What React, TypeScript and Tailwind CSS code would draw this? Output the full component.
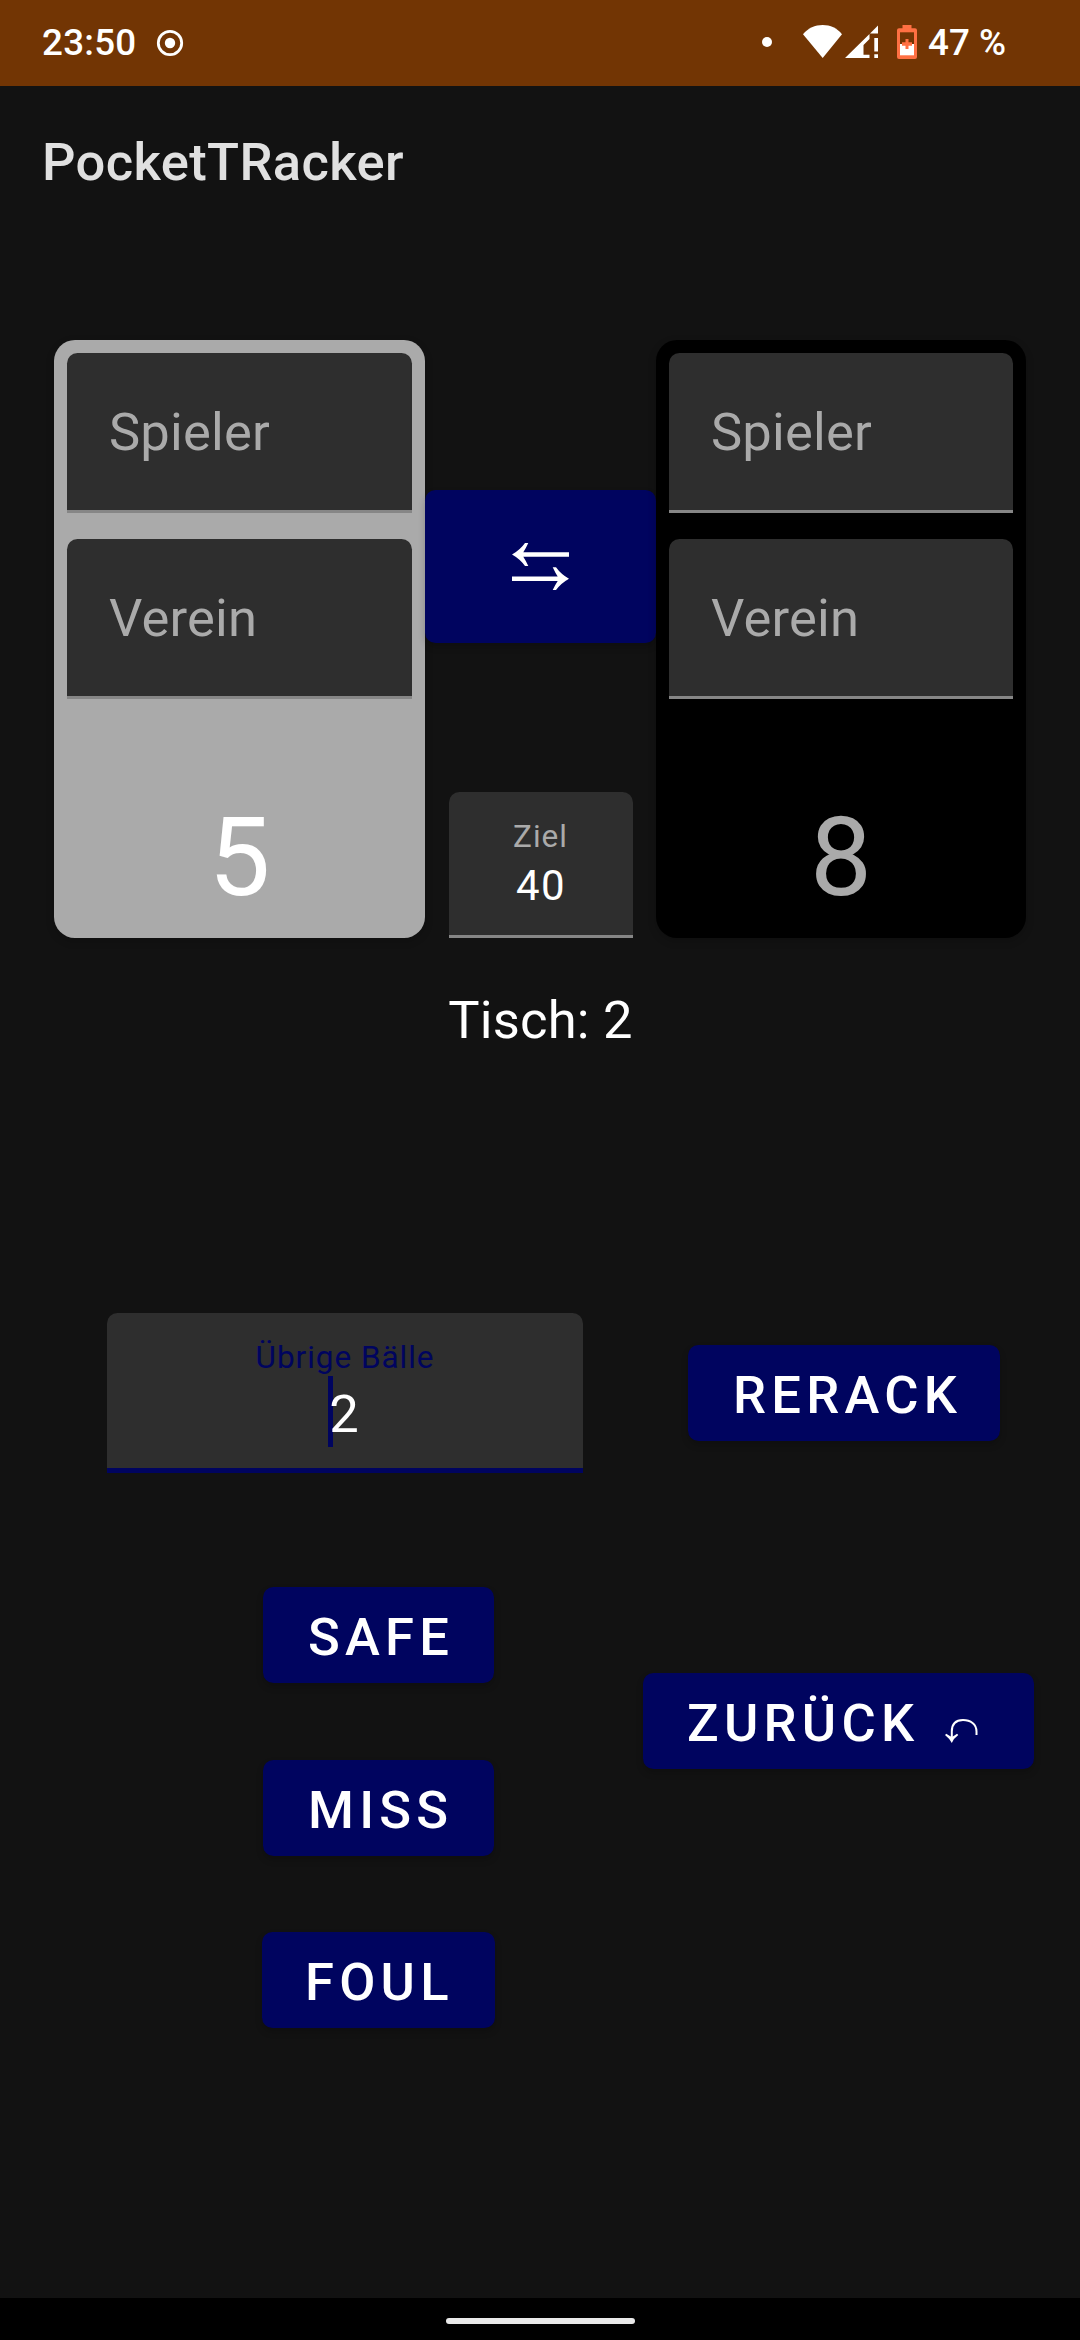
import type { ReactNode } from "react";

function StatusBar() {
  return (
    <header className="flex h-[86px] items-start bg-[#723504] text-[36.75px] font-medium leading-[44px] text-white">
      <span className="ml-[42px] mt-[21px] w-[114px] tracking-[0.25px]">23:50</span>
      <svg className="mt-[29px] h-7 w-7" viewBox="0 0 28 28" fill="none">
        <circle cx="14" cy="14" r="11.7" stroke="white" strokeWidth="2.8" />
        <circle cx="14" cy="14" r="5.2" fill="white" />
      </svg>
      <span className="ml-[578px] mt-[37px] size-2.5 rounded-full bg-white" />
      <svg className="ml-[31px] mt-6 h-[35px] w-10" viewBox="0 0 40 35">
        <path d="M0 10.3C5.2 4 12 1 19.7 1S34 4 39 10.3L19.7 34Z" fill="white" />
      </svg>
      <svg className="ml-[2px] mt-6 h-[35px] w-[34px]" viewBox="0 0 34 35" fill="white">
        <path d="M0 34 24.5 10V15L18.5 21V30.7H24.5V34Z" />
        <path d="M25 9.5 33 1.5V9.5Z" />
        <path d="M29.3 14h3.7v13.5h-3.7zM29.3 30.3h3.7V34h-3.7z" />
      </svg>
      <svg className="ml-[18px] mt-[25px] h-[34px] w-5" viewBox="0 0 20 34">
        <path d="M5.5 0h9v3.3H18a2 2 0 0 1 2 2V32a2 2 0 0 1-2 2H2a2 2 0 0 1-2-2V5.300a2 2 0 0 1 2-2h3.500Z" fill="#ff7043" />
        <path d="M3 7.300h14V19H3Z" fill="#723504" />
        <path d="M3 19h14v11.300H3Z" fill="white" />
        <path d="M8.500 14h3v3.300H15v3.500h-3.500V24h-3v-3.200H5v-3.500h3.500Z" fill="#ff7043" />
      </svg>
      <span className="ml-[11px] mt-[21px] whitespace-nowrap">47 %</span>
    </header>
  );
}

function Field({ label }: { label: string }) {
  return (
    <div className="h-[160px] rounded-t-[10.5px] border-b-[3px] border-[#868686] bg-[#2e2e2e] pl-[42px] pt-[49px] text-[52.5px] leading-[60px] tracking-[0.2px] text-[#aaaaaa]">
      {label}
    </div>
  );
}

function PlayerCard({ score, tone }: { score: number; tone: string }) {
  return (
    <section className={`flex h-[598px] flex-col rounded-[21px] p-[13px] shadow-[0_3px_8px_rgba(0,0,0,0.2)] ${tone}`}>
      <Field label="Spieler" />
      <div className="h-[26px]" />
      <Field label="Verein" />
      <div className="mt-[99px] text-center text-[110.25px] leading-[120px]">{score}</div>
    </section>
  );
}

function ActionButton({ children, size }: { children: ReactNode; size: string }) {
  return (
    <button
      className={`flex h-24 items-start rounded-[10.5px] bg-[#00045f] pt-[20px] text-[52.5px] font-medium leading-[60px] tracking-[5.25px] text-white shadow-[0_4px_7px_rgba(0,0,0,0.2)] ${size}`}
    >
      {children}
    </button>
  );
}

export default function App() {
  return (
    <div className="flex h-[2340px] w-[1080px] flex-col overflow-hidden bg-[#121212] font-['Roboto',sans-serif] text-white">
      <StatusBar />
      <h1 className="h-[254px] pl-[42px] pt-[46px] text-[52.5px] font-medium leading-[60px] tracking-[0.37px] text-[#e0e0e0]">PocketTRacker</h1>

      <div className="grid h-[598px] grid-cols-[371px_231px_370px] pl-[54px]">
        <PlayerCard score={5} tone="bg-[#aaaaaa] text-white" />
        <div className="flex flex-col items-center pt-[150px]">
          <button className="flex h-[153px] w-full items-center justify-center rounded-[10.5px] bg-[#00045f] shadow-[0_4px_7px_rgba(0,0,0,0.2)]">
            <svg className="h-[47px] w-[57px]" viewBox="0 0 57 47" fill="white">
              <path d="M0 11.500Q8 7 13 0h3.300Q13.500 6 11.300 9.200H57v4.500H11.300Q13.500 17 16.300 23H13Q8 16 0 11.500Z" />
              <path d="M57 35.700Q49 31.200 44 24.200h-3.300Q43.500 30.200 45.700 33.400H0v4.500h45.700Q43.500 41.200 40.700 47H44Q49 40.200 57 35.700Z" />
            </svg>
          </button>
          <div className="mt-[149px] h-[146px] w-[184px] rounded-t-[10.5px] border-b-[3px] border-[#868686] bg-[#2e2e2e] pt-[25px] text-center">
            <div className="text-[31.5px] leading-[40px] tracking-[1px] text-[#aaaaaa]">Ziel</div>
            <div className="mt-[4px] pl-px text-[42px] leading-[50px] tracking-[1.3px]">40</div>
          </div>
        </div>
        <PlayerCard score={8} tone="bg-black text-[#aaaaaa]" />
      </div>

      <p className="mt-[52px] pl-px text-center text-[52.5px] leading-[60px] tracking-[0.2px]">Tisch: 2</p>

      <div className="mt-[263px] flex h-[160px] items-start pl-[107px]">
        <div className="h-[160px] w-[476px] rounded-t-[10.5px] border-b-[5px] border-[#00045f] bg-[#2e2e2e] pt-[25px] text-center">
          <div className="text-[31.5px] leading-[40px] tracking-[0.95px] text-[#00045f]">Übrige Bälle</div>
          <div className="-mt-0.5 flex h-[71px] justify-center pl-0.5 text-[52.5px] leading-[76px]">
            <span className="-ml-[5px] h-[71px] w-[5px] bg-[#00045f]" />
            <span className="-ml-[4px]">2</span>
          </div>
        </div>
        <div className="ml-[105px] mt-8">
          <ActionButton size="w-[312px] pl-[45px]">RERACK</ActionButton>
        </div>
      </div>

      <div className="mt-[114px] flex items-start pl-[262px]">
        <div className="flex w-[233px] flex-col items-center">
          <ActionButton size="w-[231px] pl-[45px]">SAFE</ActionButton>
          <div className="h-[77px]" />
          <ActionButton size="w-[231px] pl-[45px]">MISS</ActionButton>
          <div className="h-[76px]" />
          <ActionButton size="w-[233px] pl-[43px]">FOUL</ActionButton>
        </div>
        <div className="ml-[148px] mt-[86px]">
          <ActionButton size="w-[391px] pl-[44px]">
            <span>ZURÜCK</span>
            <svg className="ml-[26px] mt-[25px] h-[26px] w-[33px]" viewBox="0 0 33 26" fill="none">
              <path d="M6.800 21V13.500C6.800 6 10.500 2 18 2S31.500 6 31.500 13.500V17" stroke="white" strokeWidth="2" />
              <path d="M0 17 1.300 15.700Q4 17.500 6.800 19 9.500 17.500 12 15.700L13.300 17Q9 20 6.800 25 4 20 0 17Z" fill="white" />
            </svg>
          </ActionButton>
        </div>
      </div>

      <footer className="mt-auto flex h-[42px] justify-center bg-black pt-5">
        <div className="h-1.5 w-[189px] rounded-full bg-[#e9e9e9]" />
      </footer>
    </div>
  );
}
